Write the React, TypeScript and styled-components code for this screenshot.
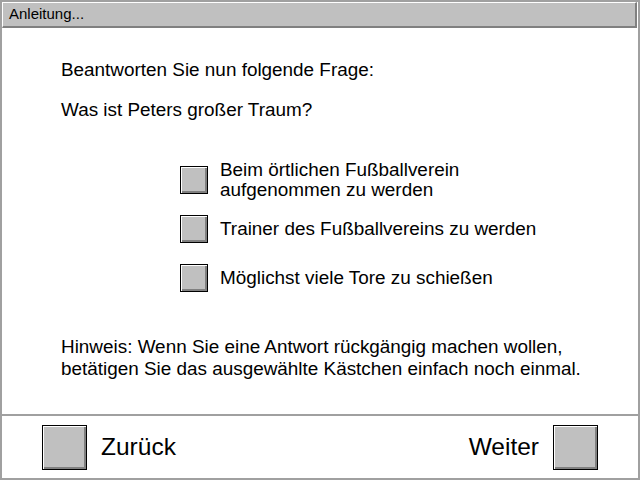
import React from 'react'
import styled, { createGlobalStyle } from 'styled-components'

const GlobalStyle = createGlobalStyle`
  html, body {
    margin: 0;
    padding: 0;
    background: #ffffff;
  }
  body {
    font-family: 'Liberation Sans', Arial, sans-serif;
    color: #000000;
  }
`

const options = [
  ['Beim örtlichen Fußballverein', 'aufgenommen zu werden'],
  ['Trainer des Fußballvereins zu werden'],
  ['Möglichst viele Tore zu schießen'],
]

const Frame = styled.div`
  box-sizing: border-box;
  width: 640px;
  height: 480px;
  border: 2px solid #a0a0a0;
  display: flex;
  flex-direction: column;
  background: #ffffff;
`

const TitleBar = styled.div`
  box-sizing: border-box;
  height: 26px;
  margin-right: 1px;
  padding: 3px 0 0 6px;
  background: #c0c0c0;
  border-top: 1px solid #ffffff;
  border-left: 1px solid #ffffff;
  border-right: 2px solid #808080;
  border-bottom: 2px solid #808080;
  font-size: 15px;
  line-height: 16px;
`

const Main = styled.div`
  flex: 1;
  padding: 32px 0 0 59px;
  font-size: 18.9px;
  line-height: 20px;
`

const Line = styled.p<{ $gap?: number }>`
  margin: 0 0 ${(p) => p.$gap ?? 0}px 0;
`

const Note = styled.div`
  line-height: 22px;
`

const Options = styled.div`
  display: grid;
  grid-auto-rows: 49px;
  margin: 35px 0 34px 119px;
`

const Option = styled.label`
  display: flex;
  align-items: center;
  gap: 12px;
`

const Box = styled.span<{ $size: number }>`
  box-sizing: border-box;
  flex: none;
  width: ${(p) => p.$size}px;
  height: ${(p) => p.$size}px;
  border: 1px solid #000000;
  background: #c0c0c0;
  box-shadow: inset 1px 1px 0 #ffffff, inset -2px -2px 0 #808080;
`

const Footer = styled.div`
  box-sizing: border-box;
  height: 64px;
  border-top: 2px solid #a0a0a0;
  display: flex;
  align-items: center;
  justify-content: space-between;
  padding: 0 40px 0 40px;
  font-size: 24.5px;
`

const NavButton = styled.div<{ $reverse?: boolean }>`
  display: flex;
  align-items: center;
  gap: 14px;
  flex-direction: ${(p) => (p.$reverse ? 'row-reverse' : 'row')};
`

export default function App() {
  return (
    <>
      <GlobalStyle />
      <Frame>
        <TitleBar>Anleitung...</TitleBar>
        <Main>
          <Line $gap={20}>Beantworten Sie nun folgende Frage:</Line>
          <Line>Was ist Peters großer Traum?</Line>
          <Options>
            {options.map((lines) => (
              <Option key={lines[0]}>
                <Box $size={28} />
                <span>
                  {lines.map((l) => (
                    <div key={l}>{l}</div>
                  ))}
                </span>
              </Option>
            ))}
          </Options>
          <Note>
            <Line>Hinweis: Wenn Sie eine Antwort rückgängig machen wollen,</Line>
            <Line>betätigen Sie das ausgewählte Kästchen einfach noch einmal.</Line>
          </Note>
        </Main>
        <Footer>
          <NavButton>
            <Box $size={45} />
            <span>Zurück</span>
          </NavButton>
          <NavButton $reverse>
            <Box $size={45} />
            <span>Weiter</span>
          </NavButton>
        </Footer>
      </Frame>
    </>
  )
}
